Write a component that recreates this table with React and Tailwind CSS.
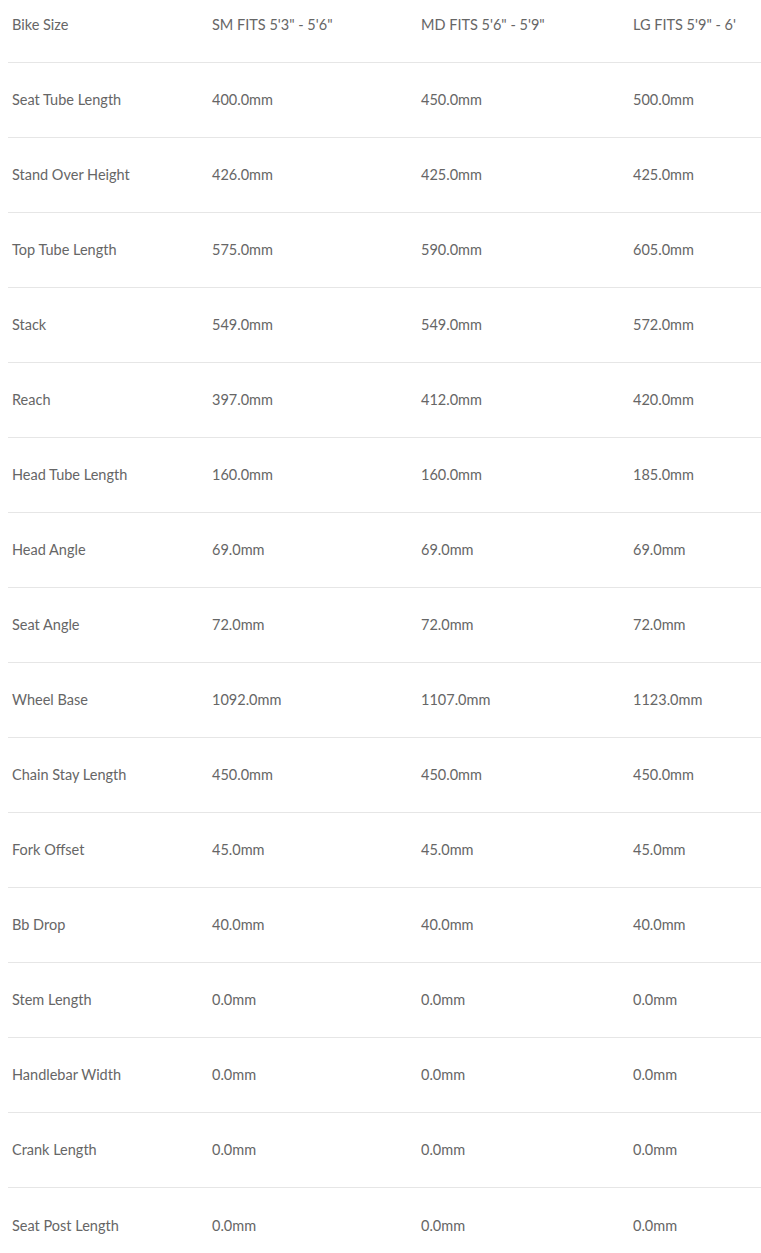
import React from "react";

const rows = [
  ["Seat Tube Length", "400.0mm", "450.0mm", "500.0mm"],
  ["Stand Over Height", "426.0mm", "425.0mm", "425.0mm"],
  ["Top Tube Length", "575.0mm", "590.0mm", "605.0mm"],
  ["Stack", "549.0mm", "549.0mm", "572.0mm"],
  ["Reach", "397.0mm", "412.0mm", "420.0mm"],
  ["Head Tube Length", "160.0mm", "160.0mm", "185.0mm"],
  ["Head Angle", "69.0mm", "69.0mm", "69.0mm"],
  ["Seat Angle", "72.0mm", "72.0mm", "72.0mm"],
  ["Wheel Base", "1092.0mm", "1107.0mm", "1123.0mm"],
  ["Chain Stay Length", "450.0mm", "450.0mm", "450.0mm"],
  ["Fork Offset", "45.0mm", "45.0mm", "45.0mm"],
  ["Bb Drop", "40.0mm", "40.0mm", "40.0mm"],
  ["Stem Length", "0.0mm", "0.0mm", "0.0mm"],
  ["Handlebar Width", "0.0mm", "0.0mm", "0.0mm"],
  ["Crank Length", "0.0mm", "0.0mm", "0.0mm"],
  ["Seat Post Length", "0.0mm", "0.0mm", "0.0mm"],
];

function Cells({ r }) {
  return (
    <>
      {r.map((c, i) => (
        <div key={i} className="pl-1 whitespace-nowrap overflow-hidden">
          {c}
        </div>
      ))}
    </>
  );
}

export default function App() {
  return (
    <div
      className="w-[761px] h-[1253px] overflow-hidden bg-white text-[#666666] text-[14.5px] leading-[18px]"
      style={{ fontFamily: "Lato, 'Liberation Sans', sans-serif" }}
    >
      <div className="ml-2">
        <div className="grid grid-cols-[200px_209px_212px_1fr] h-[63px] pt-[16px] border-b border-[#e6e6e6]">
          <Cells r={["Bike Size", "SM FITS 5'3\" - 5'6\"", "MD FITS 5'6\" - 5'9\"", "LG FITS 5'9\" - 6'"]} />
        </div>
        {rows.map((r, i) => (
          <div
            key={i}
            className={
              "grid grid-cols-[200px_209px_212px_1fr] h-[75px] items-center " +
              (i < rows.length - 1 ? "border-b border-[#e6e6e6]" : "")
            }
          >
            <Cells r={r} />
          </div>
        ))}
      </div>
    </div>
  );
}
